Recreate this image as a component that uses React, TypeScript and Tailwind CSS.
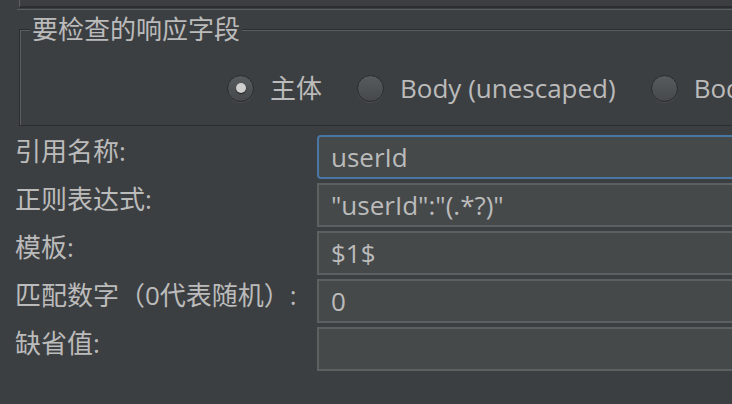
import React from 'react'

const font = "font-['Open_Sans','Noto_Sans_CJK_SC',sans-serif]"

const Radio = ({ checked, label }: { checked?: boolean; label: string }) => {
  return (
    <div className="flex items-center shrink-0">
      <div className="w-[27px] h-[27px] rounded-full border border-[#2a2c2d] bg-gradient-to-b from-[#575b5d] to-[#46494b] shadow-[0_1px_0_#4a4d4f] flex items-center justify-center">
        {checked && (
          <div className="w-[10px] h-[10px] rounded-full bg-[#cfcfcf] shadow-[0_1px_1px_#1e1e1e]" />
        )}
      </div>
      <span className="ml-[16px] text-[26px] leading-[30px] text-[#bbbbbb] whitespace-nowrap">{label}</span>
    </div>
  )
}

const rows = [
  { label: '引用名称:', value: 'userId', focused: true },
  { label: '正则表达式:', value: '"userId":"(.*?)"' },
  { label: '模板:', value: '$1$' },
  { label: '匹配数字（0代表随机）:', value: '0' },
  { label: '缺省值:', value: '' },
]

const App = () => {
  return (
    <div className={`w-[732px] h-[404px] overflow-hidden bg-[#3c3f41] ${font}`}>
      {/* panel above */}
      <div className="ml-[19px] h-[8px] border-l border-b-2 border-l-[#5c6060] border-b-[#2b2d2e] w-[800px]" />

      <div className="mt-[1px] ml-[17px] w-[800px] border-t border-[#5a5e5e]">
        <fieldset className="ml-[2px] mt-[4px] h-[112px] border border-[#2b2d2e] shadow-[inset_1px_1px_0_#5a5e5e]">
          <legend className="ml-[10px] px-[2px] bg-[#3c3f41] text-[26px] leading-[30px] text-[#bbbbbb]">
            要检查的响应字段
          </legend>
          <div className="flex items-center gap-[35px] pl-[207px] pt-[29px]">
            <Radio checked label="主体" />
            <Radio label="Body (unescaped)" />
            <Radio label="Body" />
          </div>
        </fieldset>
      </div>

      <div className="mt-[9px] flex flex-col gap-[4px]">
        {rows.map((row, i) => (
          <div key={i} className="flex items-start h-[44px]">
            <div className="w-[317px] shrink-0 pl-[15px] pt-[1px] text-[26px] leading-[30px] text-[#bbbbbb] whitespace-nowrap">
              {row.label}
            </div>
            <div
              className={
                row.focused
                  ? 'w-[440px] shrink-0 h-[44px] border-2 border-[#4a76a5] rounded-[4px] bg-[#45494a] pl-[12px] flex items-center'
                  : 'w-[440px] shrink-0 h-[44px] border-2 border-[#5d6061] bg-[#45494a] pl-[12px] flex items-center'
              }
            >
              <span className="text-[26px] leading-[30px] text-[#bbbbbb] whitespace-nowrap">{row.value}</span>
            </div>
          </div>
        ))}
      </div>
    </div>
  )
}

export default App
